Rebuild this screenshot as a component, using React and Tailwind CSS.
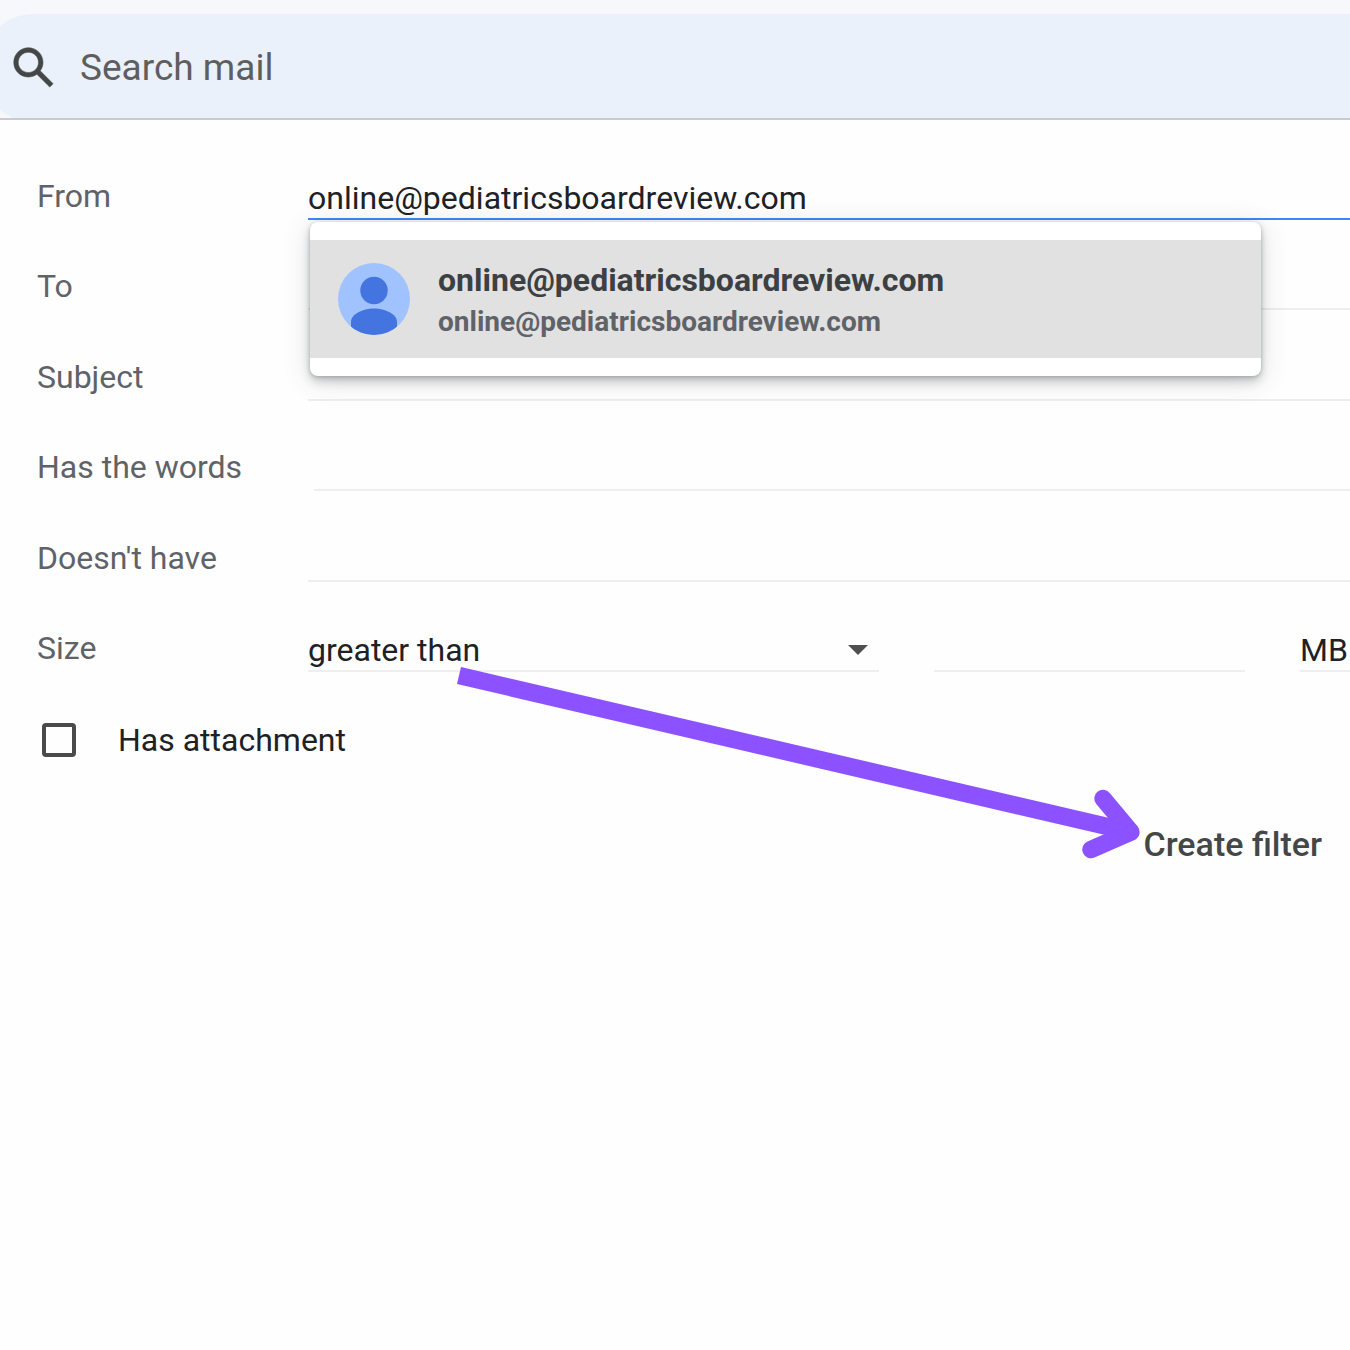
import React from "react";

const labelClass = "w-[271px] shrink-0 text-[32px] leading-10 text-[#5f6368]";
const fieldClass =
  "block h-[42px] w-full appearance-none rounded-none border-b-2 border-[#eceef0] bg-transparent text-[32px] leading-10 text-[#202124] outline-none";

function Row({ id, label, children }) {
  return (
    <div className="flex items-end">
      <label htmlFor={id} className={labelClass}>
        <span className="block h-11">{label}</span>
      </label>
      <div className="relative min-w-0 flex-1">{children}</div>
    </div>
  );
}

function SearchBar() {
  return (
    <header className="border-b-2 border-[#c9cbcc] bg-[#f6f8fc] pt-3.5">
      <div className="h-[104px] overflow-hidden">
        <div className="-ml-5 flex h-[108px] items-center rounded-l-full bg-[#eaf1fb] pl-[27px]">
          <button type="button" aria-label="Search" className="shrink-0">
            <svg
              viewBox="0 0 24 24"
              className="size-[54px] fill-[#444746] stroke-[#444746]"
              strokeWidth="0.25"
            >
              <path d="M20.49 19l-5.73-5.73C15.53 12.2 16 10.91 16 9.5 16 5.91 13.09 3 9.5 3S3 5.91 3 9.5 5.91 16 9.5 16c1.41 0 2.7-.47 3.77-1.24L19 20.49 20.49 19zM5 9.5C5 7.01 7.01 5 9.5 5S14 7.01 14 9.5 11.99 14 9.5 14 5 11.99 5 9.5z" />
            </svg>
          </button>
          <input
            type="text"
            aria-label="Search mail"
            placeholder="Search mail"
            className="ml-[19px] min-w-0 flex-1 bg-transparent text-[37px] leading-[48px] text-[#202124] outline-none placeholder:text-[#5e5e5e]"
          />
        </div>
      </div>
    </header>
  );
}

function Suggestion() {
  return (
    <div className="absolute top-full right-[89px] left-0.5 z-10 mt-0.5 rounded-lg bg-white py-[18px] shadow-[0_6px_10px_rgba(60,64,67,0.22),0_4px_28px_rgba(60,64,67,0.16),0_1px_4px_rgba(60,64,67,0.3)]">
      <button
        type="button"
        className="flex h-[118px] w-full items-center gap-7 bg-[#e1e1e1] pl-7 text-left font-bold"
      >
        <svg viewBox="0 0 72 72" className="size-[72px] shrink-0">
          <defs>
            <clipPath id="avatar">
              <circle cx="36" cy="36" r="36" />
            </clipPath>
          </defs>
          <circle cx="36" cy="36" r="36" fill="#a0c2ff" />
          <g clipPath="url(#avatar)" fill="#4374e0">
            <circle cx="36" cy="27.5" r="13.7" />
            <path d="M13 72V59c0-8 12-13.500 23-13.500S59 51 59 59v13z" />
          </g>
        </svg>
        <span className="min-w-0 flex-1 pt-0.5">
          <span className="block text-[32px] leading-[44px] text-[#3c4043]">
            online@pediatricsboardreview.com
          </span>
          <span className="block text-[28px] leading-10 text-[#5f6368]">
            online@pediatricsboardreview.com
          </span>
        </span>
      </button>
    </div>
  );
}

function Arrow() {
  return (
    <svg
      viewBox="448 656 704 210"
      className="pointer-events-none absolute top-[656px] left-[448px] z-20 h-[210px] w-[704px]"
      fill="none"
      stroke="#8c52ff"
      strokeWidth="17.5"
      aria-hidden="true"
    >
      <path d="M459 675.500L1131 832" />
      <path d="M1103 798.500L1131 832L1091 849.500" strokeLinecap="round" strokeLinejoin="round" />
    </svg>
  );
}

export default function App() {
  return (
    <div className="relative min-h-screen overflow-hidden bg-[#fefefe] font-[Roboto,sans-serif]">
      <SearchBar />
      <form className="pt-[9px] pl-[37px]">
        <div className="grid min-h-[543px] auto-rows-fr">
          <Row id="from" label="From">
            <input
              id="from"
              type="text"
              defaultValue="online@pediatricsboardreview.com"
              className="block h-[42px] w-full border-b-2 border-[#4285f4] bg-transparent text-[32px] leading-10 text-[#202124] outline-none"
            />
            <Suggestion />
          </Row>
          <Row id="to" label="To">
            <input id="to" type="text" className={fieldClass} />
          </Row>
          <Row id="subject" label="Subject">
            <input id="subject" type="text" className={fieldClass} />
          </Row>
          <Row id="words" label="Has the words">
            <div className="pl-1.5">
              <input id="words" type="text" className={fieldClass} />
            </div>
          </Row>
          <Row id="without" label="Doesn't have">
            <input id="without" type="text" className={fieldClass} />
          </Row>
          <Row id="size" label="Size">
            <div className="grid grid-cols-[571fr_311fr_50px] gap-[55px]">
              <div className="relative">
                <select id="size" className={fieldClass} defaultValue="greater">
                  <option value="greater">greater than</option>
                  <option value="less">less than</option>
                </select>
                <svg
                  viewBox="0 0 20 10"
                  className="pointer-events-none absolute top-[15px] right-[11px] h-2.5 w-5 fill-[#505050]"
                >
                  <path d="M0 0h20L10 10z" />
                </svg>
              </div>
              <input type="text" aria-label="Size amount" className={fieldClass} />
              <select aria-label="Size unit" className={fieldClass} defaultValue="MB">
                <option>MB</option>
                <option>KB</option>
              </select>
            </div>
          </Row>
        </div>
        <div className="flex h-[136px] items-center">
          <input
            id="attachment"
            type="checkbox"
            className="ml-[5px] size-[34px] shrink-0 appearance-none rounded border-4 border-[#4a4a4a]"
          />
          <label htmlFor="attachment" className="pl-[42px] text-[32px] leading-10 text-[#202124]">
            Has attachment
          </label>
        </div>
        <div className="flex justify-end pt-4 pr-7">
          <button type="button" className="text-[34px] leading-10 font-medium text-[#444746]">
            Create filter
          </button>
        </div>
      </form>
      <Arrow />
    </div>
  );
}
